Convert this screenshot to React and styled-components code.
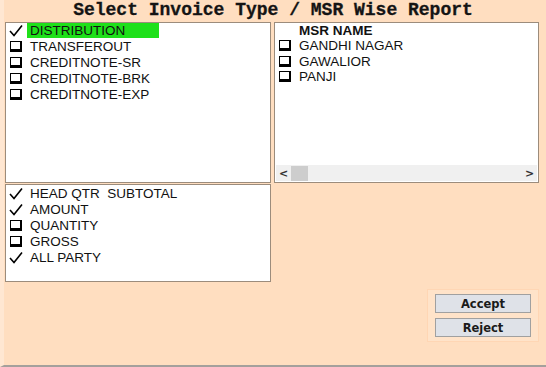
import React from "react";
import styled, { createGlobalStyle } from "styled-components";

const GlobalStyle = createGlobalStyle`
  html, body {
    margin: 0;
    padding: 0;
    background: #ffdec0;
  }
`;

const Window = styled.div`
  width: 546px;
  height: 367px;
  box-sizing: border-box;
  background: #ffdec0;
  border-left: 4px solid #ffe7d2;
  border-bottom: 2px solid #a4a09c;
  font-family: "Liberation Sans", Arial, sans-serif;
  display: flex;
  flex-direction: column;
  padding: 0 7px 0 1px;
`;

const Title = styled.h1`
  margin: 0;
  height: 22px;
  font-family: "Liberation Mono", "Courier New", monospace;
  font-weight: bold;
  font-size: 18px;
  line-height: 21px;
  text-align: center;
  color: #141414;
  padding-left: 2px;
  -webkit-text-stroke: 0.3px #141414;
`;

const Row = styled.div`
  display: flex;
  gap: 3px;
  margin-top: ${(p) => p.$top || 0}px;
`;

const Panel = styled.div`
  box-sizing: border-box;
  width: ${(p) => p.$w}px;
  height: ${(p) => p.$h}px;
  background: #ffffff;
  border: 1px solid #9c8c7c;
  display: flex;
  flex-direction: column;
  padding: ${(p) => p.$pad || "0 0 0 3px"};
`;

const List = styled.div`
  flex: 1;
  display: flex;
  flex-direction: column;
  margin-top: ${(p) => p.$shift || 0}px;
`;

const Item = styled.div`
  display: flex;
  align-items: center;
  height: ${(p) => p.$h || 16}px;
  font-size: 13.5px;
  color: #111;
`;

const Mark = styled.span`
  width: 14px;
  height: 16px;
  margin-right: 7px;
  display: flex;
  align-items: center;
  justify-content: center;
`;

const Box = styled.span`
  display: block;
  box-sizing: border-box;
  width: 12px;
  height: 11px;
  border: 1px solid #000;
  border-right-width: 2px;
  border-bottom-width: 3px;
  background: #fff;
`;

const Label = styled.span`
  padding: 0 3px;
  margin-left: -3px;
  line-height: 15px;
  white-space: pre;
  background: ${(p) => (p.$selected ? "#1ee01a" : "transparent")};
  width: ${(p) => (p.$selected ? "126px" : "auto")};
`;

const Header = styled.div`
  font-size: 13.5px;
  font-weight: bold;
  height: 15px;
  line-height: 15px;
  padding-left: 21px;
  color: #111;
`;

const Scrollbar = styled.div`
  height: 16px;
  margin: 0 1px 1px -2px;
  background: #f0f0f0;
  display: flex;
  align-items: center;
  color: #333;
`;

const Arrow = styled.span`
  width: 15px;
  text-align: center;
  font-weight: bold;
  font-family: "DejaVu Sans", sans-serif;
  font-size: 11px;
`;

const Thumb = styled.span`
  width: 17px;
  height: 15px;
  background: #cdcdcd;
`;

const Track = styled.span`
  flex: 1;
`;

const Footer = styled.div`
  display: flex;
  justify-content: flex-end;
  margin-top: 7px;
`;

const ButtonBox = styled.div`
  width: 112px;
  height: 53px;
  box-sizing: border-box;
  background: #ffe3c9;
  border: 1px solid #ffd6b4;
  display: flex;
  flex-direction: column;
  align-items: center;
  gap: 5px;
  padding-top: 4px;
`;

const Button = styled.button`
  width: 96px;
  height: 19px;
  box-sizing: border-box;
  padding: 0;
  background: #dfe2e8;
  border: 1px solid #a0a0a0;
  font-family: "DejaVu Sans", sans-serif;
  font-weight: bold;
  font-size: 11.5px;
  line-height: 16px;
  color: #1a1a1a;
`;

const Check = () => (
  <svg width="14" height="13" viewBox="0 0 14 13">
    <path d="M1 7 L5 11.5 L13 1.5" fill="none" stroke="#000" strokeWidth="1.6" />
  </svg>
);

const types = [
  { name: "DISTRIBUTION", on: true },
  { name: "TRANSFEROUT" },
  { name: "CREDITNOTE-SR" },
  { name: "CREDITNOTE-BRK" },
  { name: "CREDITNOTE-EXP" },
];

const msrs = ["GANDHI NAGAR", "GAWALIOR", "PANJI"];

const options = [
  { name: "HEAD QTR  SUBTOTAL", on: true },
  { name: "AMOUNT", on: true },
  { name: "QUANTITY" },
  { name: "GROSS" },
  { name: "ALL PARTY", on: true },
];

function CheckItem({ name, on, selected, h }) {
  return (
    <Item $h={h}>
      <Mark>{on ? <Check /> : <Box />}</Mark>
      <Label $selected={selected}>{name}</Label>
    </Item>
  );
}

export default function App() {
  return (
    <Window>
      <GlobalStyle />
      <Title>Select Invoice Type / MSR Wise Report</Title>
      <Row>
        <Panel $w={267} $h={161}>
          <List $shift={-1}>
            {types.map((t, i) => (
              <CheckItem key={t.name} name={t.name} on={t.on} selected={i === 0} />
            ))}
          </List>
        </Panel>
        <Panel $w={266} $h={161}>
          <Header>MSR NAME</Header>
          <List>
            {msrs.map((m) => (
              <CheckItem key={m} name={m} h={15.5} />
            ))}
          </List>
          <Scrollbar>
            <Arrow>&lt;</Arrow>
            <Thumb />
            <Track />
            <Arrow>&gt;</Arrow>
          </Scrollbar>
        </Panel>
      </Row>
      <Row $top={1}>
        <Panel $w={266} $h={98}>
          <List>
            {options.map((o) => (
              <CheckItem key={o.name} name={o.name} on={o.on} />
            ))}
          </List>
        </Panel>
      </Row>
      <Footer>
        <ButtonBox>
          <Button>Accept</Button>
          <Button>Reject</Button>
        </ButtonBox>
      </Footer>
    </Window>
  );
}
